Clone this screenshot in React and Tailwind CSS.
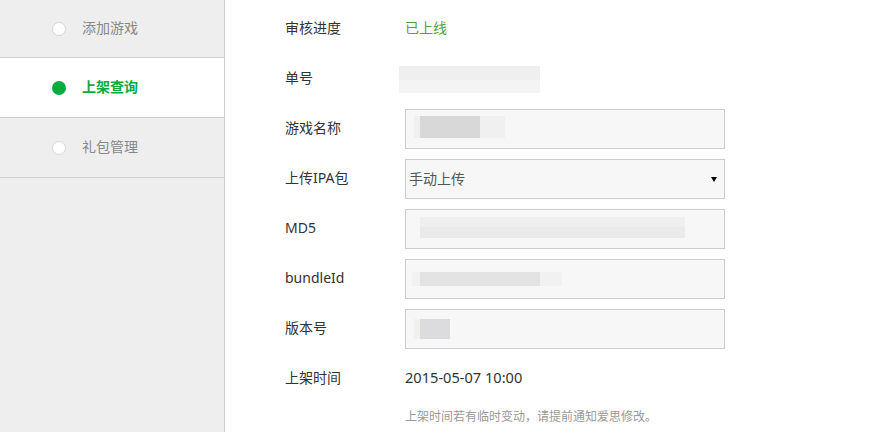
const menu = [
  { name: '添加游戏', active: false, h: 'h-[58px]' },
  { name: '上架查询', active: true, h: 'h-[60px]' },
  { name: '礼包管理', active: false, h: 'h-[60px]' },
];

function Blur({ className }) {
  return <div className={`absolute ${className}`} />;
}

function Field({ children }) {
  return (
    <div className="relative h-[40px] w-[320px] border border-[#cccccc] bg-[#f7f7f7]">
      {children}
    </div>
  );
}

function Row({ label, children }) {
  return (
    <div className="flex h-[50px] items-center">
      <div className="w-[120px] pb-[3px] text-[14px] text-[#333]">{label}</div>
      {children}
    </div>
  );
}

export default function App() {
  return (
    <div
      className="flex h-[432px] w-[892px] overflow-hidden bg-white"
      style={{ fontFamily: '"Noto Sans", "Noto Sans CJK SC", sans-serif' }}
    >
      {/* Sidebar */}
      <div className="w-[225px] shrink-0 border-r border-[#cfcfcf] bg-[#eeeeee]">
        {menu.map((m) => (
          <div
            key={m.name}
            className={`flex ${m.h} items-center border-b border-[#cfcfcf] pl-[52px] ${m.active ? 'bg-white' : ''}`}
          >
            {m.active ? (
              <span className="h-[14px] w-[14px] rounded-full bg-[#09ab3f]" />
            ) : (
              <span className="h-[14px] w-[14px] rounded-full border border-[#d5d5d5] bg-white" />
            )}
            <span
              className={`ml-[16px] pb-[2px] text-[14px] ${m.active ? 'font-semibold text-[#09ab3f]' : 'text-[#888]'}`}
            >
              {m.name}
            </span>
          </div>
        ))}
      </div>

      {/* Main */}
      <div className="flex-1 pl-[60px] pt-[4px]">
        <Row label="审核进度">
          <span className="pb-[3px] text-[14px] text-[#56a047]">已上线</span>
        </Row>
        <Row label="单号">
          <div className="relative -ml-[6px] h-[27px] w-[141px]">
            <div className="h-[14px] w-full bg-[#efefef]" />
            <div className="h-[13px] w-full bg-[#f4f4f4]" />
          </div>
        </Row>
        <Row label="游戏名称">
          <Field>
            <Blur className="left-[8px] top-[6px] h-[22px] w-[91px] bg-[#f0f0f0]" />
            <Blur className="left-[14px] top-[6px] h-[22px] w-[60px] bg-[#d8d8d8]" />
          </Field>
        </Row>
        <Row label="上传IPA包">
          <Field>
            <div className="flex h-full items-center justify-between pl-[3px] pr-[7px]">
              <span className="pb-[2px] text-[14px] text-[#555]">手动上传</span>
              <span className="h-0 w-0 border-l-[3px] border-r-[3px] border-t-[5px] border-l-transparent border-r-transparent border-t-black" />
            </div>
          </Field>
        </Row>
        <Row label="MD5">
          <Field>
            <Blur className="left-[14px] top-[7px] h-[10px] w-[265px] bg-[#efefef]" />
            <Blur className="left-[14px] top-[17px] h-[11px] w-[265px] bg-[#eaeaea]" />
          </Field>
        </Row>
        <Row label="bundleId">
          <Field>
            <Blur className="left-[6px] top-[12px] h-[14px] w-[150px] bg-[#f1f1f1]" />
            <Blur className="left-[14px] top-[12px] h-[14px] w-[120px] bg-[#e3e3e3]" />
          </Field>
        </Row>
        <Row label="版本号">
          <Field>
            <Blur className="left-[8px] top-[9px] h-[20px] w-[36px] bg-[#f0f0ee]" />
            <Blur className="left-[14px] top-[9px] h-[20px] w-[30px] bg-[#dcdcde]" />
          </Field>
        </Row>
        <Row label="上架时间">
          <span className="pb-[2px] text-[14.6px] text-[#333]">2015-05-07 10:00</span>
        </Row>
        <div className="ml-[120px] mt-[4px] text-[12px] text-[#999]">
          上架时间若有临时变动，请提前通知爱思修改。
        </div>
      </div>
    </div>
  );
}
